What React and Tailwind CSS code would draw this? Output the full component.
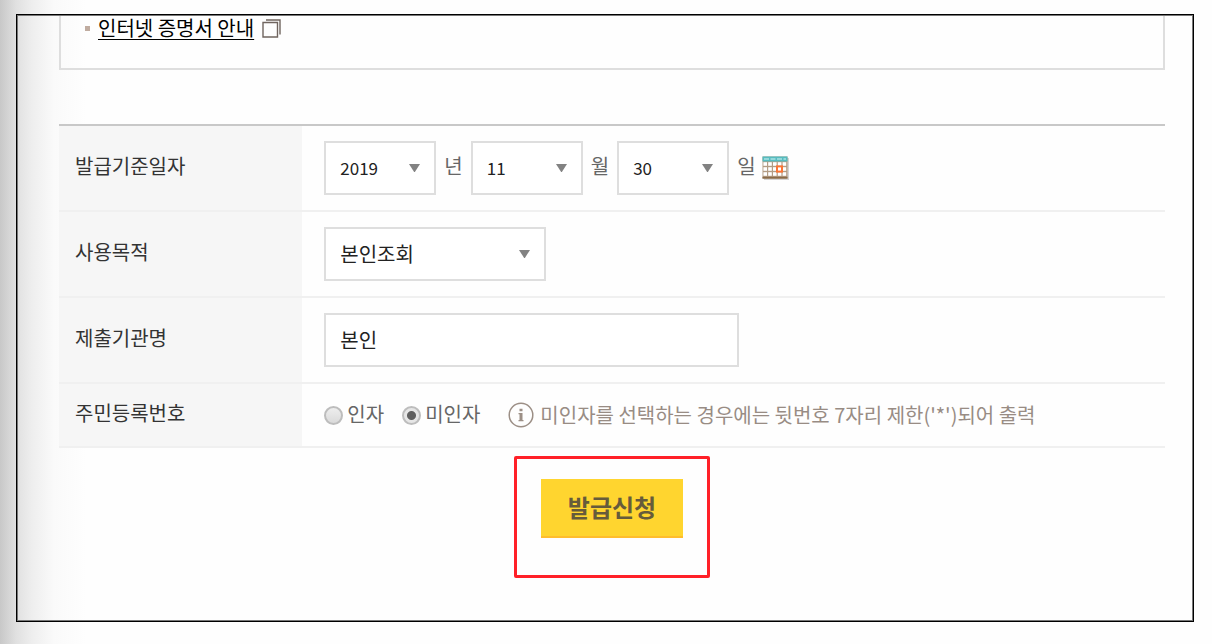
import React from "react";

const boxBorder = "border-2 border-[#dedede]";

function Dropdown({ id, label, value, className }) {
  return (
    <span className={"relative inline-flex h-[54px] items-center " + className}>
      <select
        id={id}
        aria-label={label}
        defaultValue={value}
        className={"h-full w-full appearance-none rounded-none bg-white px-3.5 text-[#222] outline-none " + boxBorder}
      >
        <option>{value}</option>
      </select>
      <svg className="pointer-events-none absolute right-4 h-2 w-[11px]" viewBox="0 0 11 8" aria-hidden="true">
        <path d="M0 0H11L6.2 7.4Q5.5 8.4 4.8 7.4Z" fill="#828282" />
      </svg>
    </span>
  );
}

function Row({ label, htmlFor, children, className }) {
  return (
    <tr className={"border-b-2 border-[#f0f0f0] " + className}>
      <th scope="row" className="w-[22%] bg-[#f5f5f5]/90 px-4 pb-1 text-left font-normal text-[#333]">
        <label htmlFor={htmlFor}>{label}</label>
      </th>
      <td className="pl-[22px] text-[#666]">{children}</td>
    </tr>
  );
}

function CalendarIcon() {
  return (
    <svg className="h-6 w-[27px]" viewBox="0 0 27 24" aria-hidden="true">
      <rect x="2" y="2" width="25" height="22" fill="#d4d4d4" />
      <rect x="0.5" y="0.5" width="25" height="22" fill="#b39c84" />
      <rect x="0.5" y="0.5" width="25" height="5" fill="#56bcc0" />
      <path d="M2 3H24" stroke="#a9e2e3" strokeWidth="1.4" strokeDasharray="5 1.5" />
      <g fill="#fff">
        {[6.2, 11.2, 16.2].map((y) =>
          [1.4, 6.2, 11, 15.8, 20.6].map((x) => <rect key={x + "-" + y} x={x} y={y} width="3.6" height="3.6" />)
        )}
      </g>
      <rect x="0.5" y="20.8" width="25" height="1.8" fill="#8a6b48" />
      <rect x="15" y="10.4" width="5" height="5.2" fill="#fff" stroke="#fb7434" strokeWidth="2" />
    </svg>
  );
}

function Radio({ label, checked }) {
  return (
    <label className="flex items-center gap-1">
      <input
        type="radio"
        name="rrn"
        defaultChecked={checked}
        className="m-0 h-[19px] w-[19px] appearance-none rounded-full border-2 border-[#bdbdbd] bg-linear-to-b from-[#eeeeee] to-[#dadada] checked:bg-[radial-gradient(circle,#606060_0,#606060_4px,#e6e6e6_5px)]"
      />
      <span className="pb-0.5">{label}</span>
    </label>
  );
}

export default function App() {
  return (
    <div className="flex min-h-screen bg-[#fefefe] bg-[linear-gradient(to_right,#c8c8c8_0,#e0e0e0_16px,#eeeeee_32px,#fafafa_54px,#fefefe_86px)] pt-3.5 pr-[18px] pb-[22px] pl-4 font-['Noto_Sans_CJK_KR',sans-serif] text-xl leading-6">
      <main className="flex-1 border border-black pr-7 pl-[42px] outline outline-1 -outline-offset-2 outline-[#777]">
        <section className="h-[55px] border-2 border-t-0 border-[#dedede] pt-px pl-[22px]">
          <div className="flex items-center">
            <span className="mr-2 ml-0.5 h-[5px] w-[5px] bg-[#c0aca0]" />
            <a href="#guide" className="text-black underline decoration-1 underline-offset-3">인터넷 증명서 안내</a>
            <svg className="ml-2 h-[19px] w-[19px]" viewBox="0 0 19 19" fill="none" stroke="#70655f" strokeWidth="1.4" aria-hidden="true">
              <path d="M1 3.5H15.5V18H1ZM4 1H18V15.5" />
            </svg>
          </div>
        </section>

        <form onSubmit={(e) => e.preventDefault()}>
          <table className="mt-[54px] w-full border-collapse border-t-2 border-[#c8c8c8]">
            <tbody>
              <Row label="발급기준일자" htmlFor="year" className="h-[86px]">
                <div className="flex items-center">
                  <Dropdown id="year" label="년" value="2019" className="w-28 text-[17px]" />
                  <span className="mx-2 pb-1">년</span>
                  <Dropdown id="month" label="월" value="11" className="w-28 text-[17px]" />
                  <span className="mx-2 pb-1">월</span>
                  <Dropdown id="day" label="일" value="30" className="w-28 text-[17px]" />
                  <span className="ml-2 pb-1">일</span>
                  <button type="button" aria-label="달력" className="ml-1.5">
                    <CalendarIcon />
                  </button>
                </div>
              </Row>
              <Row label="사용목적" htmlFor="purpose" className="h-[86px]">
                <div className="flex">
                  <Dropdown id="purpose" label="사용목적" value="본인조회" className="w-[222px]" />
                </div>
              </Row>
              <Row label="제출기관명" htmlFor="agency" className="h-[86px]">
                <div className="flex">
                  <input id="agency" defaultValue="본인" className={"h-[54px] w-[415px] bg-white px-3.5 pb-0.5 text-[#222] outline-none " + boxBorder} />
                </div>
              </Row>
              <Row label="주민등록번호" className="h-16">
                <div className="flex items-center">
                  <Radio label="인자" />
                  <span className="w-[18px]" />
                  <Radio label="미인자" checked />
                  <svg className="mr-1.5 ml-7 h-[26px] w-[26px]" viewBox="0 0 26 26" fill="none" stroke="#9c8f86" aria-hidden="true">
                    <circle cx="13" cy="13" r="11.8" strokeWidth="1.5" />
                    <path d="M13 6.8V9.2M13 11V18.5" strokeWidth="3" />
                    <path d="M10.5 11.6H13M10.5 18.6H15.5" strokeWidth="1.2" />
                  </svg>
                  <span className="text-[#988c84]">미인자를 선택하는 경우에는 뒷번호 7자리 제한('*')되어 출력</span>
                </div>
              </Row>
            </tbody>
          </table>

          <div className="mt-2 flex justify-center">
            <div className="h-[122px] rounded-xs border-3 border-[#ff2028] px-6 pt-5">
              <button type="submit" className="h-[59px] w-[142px] border-b-2 border-[#ffbd2c] bg-[#ffd52f] pb-0.5 text-2xl font-bold text-[#665b3b]">
                발급신청
              </button>
            </div>
          </div>
        </form>
      </main>
    </div>
  );
}
